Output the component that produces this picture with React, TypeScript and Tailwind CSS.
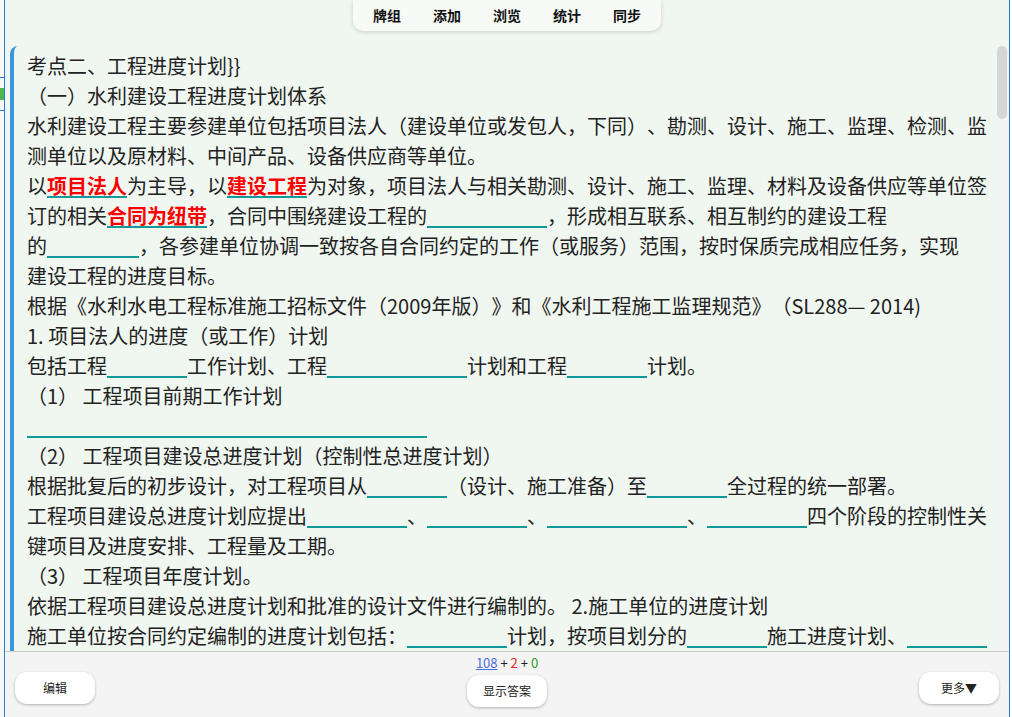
import React from 'react'

const Blank = ({ w }: { w: string }) => (
    <span className={`inline-block h-[2px] align-[-4px] border-b-2 border-[#12999a] ${w}`} />
)

const Hot = ({ children }: { children: React.ReactNode }) => (
    <span className="inline-block leading-[21px] border-b-2 border-[#12999a] font-bold text-[#ff0000]">{children}</span>
)

const Line = ({ children }: { children?: React.ReactNode }) => (
    <div className="h-[30px] leading-[30px] whitespace-nowrap">{children}</div>
)

const Btn = ({ label, className }: { label: string, className?: string }) => (
    <div className={`w-[80px] h-[32px] flex items-center justify-center rounded-[12px] bg-white text-[12px] text-[#222] shadow-[0_1px_3px_rgba(0,0,0,0.28)] ${className ?? ''}`}>
        {label}
    </div>
)

const App = () => {
    const tabs = ['牌组', '添加', '浏览', '统计', '同步']

    return (
        <div className="w-[1012px] h-[717px] flex overflow-hidden bg-[#f0f6f0] font-['Noto_Sans_CJK_SC','Microsoft_YaHei',sans-serif] text-[#222] [text-spacing-trim:space-all]">
            {/* edge of the window behind */}
            <div className="w-[4px] flex flex-col bg-[#f7f7f7]">
                <div className="h-[77px]" />
                <div className="h-px bg-[#2a7bd6]" />
                <div className="h-[10px]" />
                <div className="h-[12px] bg-[#4cb84c]" />
                <div className="h-[10px]" />
                <div className="h-px bg-[#2a7bd6]" />
            </div>
            <div className="w-px bg-[#2a7bd6]" />

            <div className="w-[1004px] flex flex-col">
                {/* top toolbar */}
                <div className="h-[46px] flex justify-center">
                    <div className="h-[31px] flex items-center gap-[32px] px-[20px] rounded-b-[10px] bg-[#f7faf7] shadow-[0_1px_4px_rgba(0,0,0,0.16)] text-[14px] font-bold text-[#111]">
                        {tabs.map(t => <span key={t}>{t}</span>)}
                    </div>
                </div>

                {/* card */}
                <div className="flex-1 flex min-h-0">
                    <div className="flex-1 ml-[5px] border-l-4 border-[#3b96dc] rounded-tl-[8px] pl-[13px] pt-[5px] overflow-hidden text-[20px]">
                        <Line>{'考点二、工程进度计划}}'}</Line>
                        <Line>（一）水利建设工程进度计划体系</Line>
                        <Line>水利建设工程主要参建单位包括项目法人（建设单位或发包人，下同）、勘测、设计、施工、监理、检测、监</Line>
                        <Line>测单位以及原材料、中间产品、设备供应商等单位。</Line>
                        <Line>以<Hot>项目法人</Hot>为主导，以<Hot>建设工程</Hot>为对象，项目法人与相关勘测、设计、施工、监理、材料及设备供应等单位签</Line>
                        <Line>订的相关<Hot>合同为纽带</Hot>，合同中围绕建设工程的<Blank w="w-[120px]" />，形成相互联系、相互制约的建设工程</Line>
                        <Line>的<Blank w="w-[92px]" />，各参建单位协调一致按各自合同约定的工作（或服务）范围，按时保质完成相应任务，实现</Line>
                        <Line>建设工程的进度目标。</Line>
                        <Line>根据《水利水电工程标准施工招标文件（2009年版）》和《水利工程施工监理规范》（SL288— 2014)</Line>
                        <Line>1. 项目法人的进度（或工作）计划</Line>
                        <Line>包括工程<Blank w="w-[80px]" />工作计划、工程<Blank w="w-[140px]" />计划和工程<Blank w="w-[80px]" />计划。</Line>
                        <Line>（1） 工程项目前期工作计划</Line>
                        <Line><Blank w="w-[400px]" /></Line>
                        <Line>（2） 工程项目建设总进度计划（控制性总进度计划）</Line>
                        <Line>根据批复后的初步设计，对工程项目从<Blank w="w-[80px]" />（设计、施工准备）至<Blank w="w-[80px]" />全过程的统一部署。</Line>
                        <Line>工程项目建设总进度计划应提出<Blank w="w-[100px]" />、<Blank w="w-[100px]" />、<Blank w="w-[140px]" />、<Blank w="w-[100px]" />四个阶段的控制性关</Line>
                        <Line>键项目及进度安排、工程量及工期。</Line>
                        <Line>（3） 工程项目年度计划。</Line>
                        <Line>依据工程项目建设总进度计划和批准的设计文件进行编制的。 2.施工单位的进度计划</Line>
                        <Line>施工单位按合同约定编制的进度计划包括：<Blank w="w-[100px]" />计划，按项目划分的<Blank w="w-[80px]" />施工进度计划、<Blank w="w-[80px]" /></Line>
                    </div>
                    <div className="w-[12px] bg-[#f4f4f4]">
                        <div className="w-[10px] h-[73px] rounded-[5px] bg-[#d6d6d6]" />
                    </div>
                </div>

                {/* bottom bar */}
                <div className="h-[66px] border-t border-[#cfcfcf] bg-[#f4f4f4] flex justify-between items-start px-[10px]">
                    <Btn label="编辑" className="mt-[20px]" />
                    <div className="flex flex-col items-center pt-[3px]">
                        <div className="h-[16px] leading-[16px] text-[13px] text-[#222]">
                            <span className="text-[#4a6fe3] underline">108</span>
                            <span> + </span>
                            <span className="text-[#e02020]">2</span>
                            <span> + </span>
                            <span className="text-[#2a9a2a]">0</span>
                        </div>
                        <Btn label="显示答案" className="mt-[4px]" />
                    </div>
                    <Btn label="更多▼" className="mt-[20px]" />
                </div>
            </div>

            <div className="w-px bg-[#2a7bd6]" />
            <div className="w-[2px] bg-white" />
        </div>
    )
}

export default App
